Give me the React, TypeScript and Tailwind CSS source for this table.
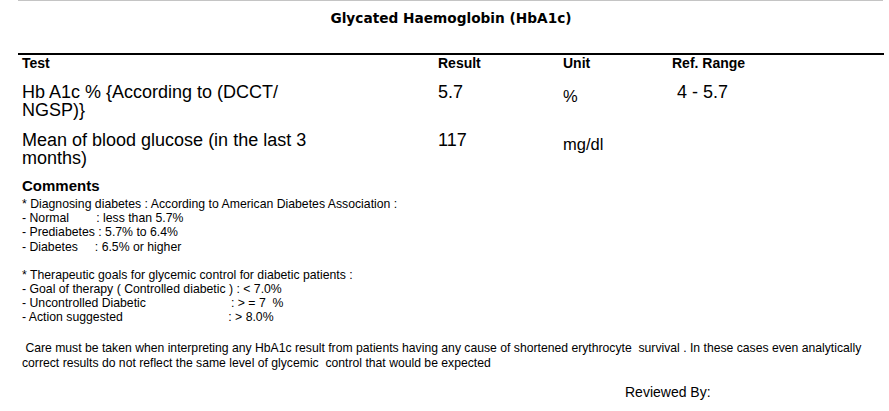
const diagnosing = [
  '* Diagnosing diabetes : According to American Diabetes Association :',
  '- Normal        : less than 5.7%',
  '- Prediabetes : 5.7% to 6.4%',
  '- Diabetes     : 6.5% or higher',
];

const therapeutic = [
  '* Therapeutic goals for glycemic control for diabetic patients :',
  '- Goal of therapy ( Controlled diabetic ) : < 7.0%',
  '- Uncontrolled Diabetic                         : > = 7  %',
  '- Action suggested                               : > 8.0%',
];

const rows = [
  { test: 'Hb A1c % {According to (DCCT/ NGSP)}', result: '5.7', unit: '%', range: ' 4 - 5.7' },
  { test: 'Mean of blood glucose (in the last 3 months)', result: '117', unit: 'mg/dl', range: '' },
];

export default function App() {
  return (
    <div className="h-[411px] w-[889px] overflow-hidden bg-white text-black" style={{ fontFamily: '"Liberation Sans", Arial, sans-serif' }}>
      <div className="ml-[18px] w-[866px]">
        <div className="h-px w-[865px] bg-[#c4c4c4]" />

        <h1
          className="pt-[9px] text-center text-[13.7px] font-bold leading-[16px]"
          style={{ fontFamily: '"DejaVu Sans", Verdana, sans-serif' }}
        >
          Glycated Haemoglobin (HbA1c)
        </h1>

        <div className="mt-[27px] h-[2px] bg-black" />

        <div className="grid grid-cols-[416px_125px_109px_1fr] px-[4px] text-[14px] font-bold leading-[16px]">
          <div>Test</div>
          <div>Result</div>
          <div>Unit</div>
          <div>Ref. Range</div>
        </div>

        {rows.map((row) => (
          <div key={row.test} className="mt-[12px] grid grid-cols-[416px_125px_109px_1fr] px-[4px] text-[18px] leading-[18px]">
            <div className="w-[305px]">{row.test}</div>
            <div>{row.result}</div>
            <div className="pt-[4px] text-[16.5px]">{row.unit}</div>
            <div className="whitespace-pre">{row.range}</div>
          </div>
        ))}

        <div className="mt-[11px] px-[4px]">
          <div className="text-[15px] font-bold leading-[16px]">Comments</div>
          <div className="mt-[3px] whitespace-pre text-[12.25px] leading-[14.2px]">
            {diagnosing.map((line) => (
              <div key={line}>{line}</div>
            ))}
            <div className="h-[14px]" />
            {therapeutic.map((line) => (
              <div key={line}>{line}</div>
            ))}
          </div>

          <p className="mt-[16px] text-[12.2px] leading-[15px]">
            &nbsp;Care must be taken when interpreting any HbA1c result from patients having any cause of shortened erythrocyte&nbsp; survival . In
            these cases even analytically correct results do not reflect the same level of glycemic&nbsp; control that would be expected
          </p>

          <div className="mt-[13px] pl-[603px] text-[14px] leading-[16px]">Reviewed By:</div>
        </div>
      </div>
    </div>
  );
}
